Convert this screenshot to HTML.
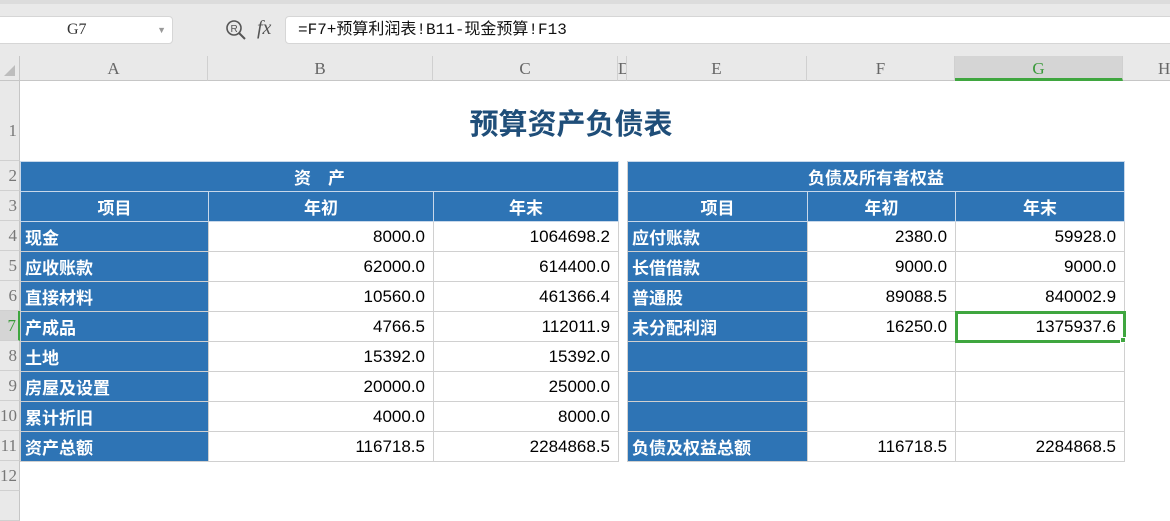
<!DOCTYPE html>
<html><head><meta charset="utf-8"><style>
*{margin:0;padding:0;box-sizing:border-box}
body{width:1170px;height:499px;overflow:hidden;background:#fff;position:relative;font-family:"Liberation Sans","Noto Sans CJK SC",sans-serif}
.a{position:absolute}
.top{left:0;top:0;width:1170px;height:56px;background:#e9e9e9;border-top:4px solid #dcdcdc}
.nb{left:-4px;top:16px;width:177px;height:28px;background:#fff;border:1px solid #d6d6d6;border-radius:4px;font:16px "Liberation Serif",serif;color:#333;line-height:26px;padding-left:70px}
.fb{left:285px;top:16px;width:900px;height:28px;background:#fff;border:1px solid #d6d6d6;border-radius:4px;font:16px "Liberation Mono","Noto Sans CJK SC",monospace;color:#111;line-height:26px;padding-left:12px}
.ch{top:56px;height:25px;background:#e9e9e9;border-bottom:1px solid #c6c6c6;border-right:1px solid #d0d0d0;font:17px "Liberation Serif",serif;color:#666;text-align:center;line-height:25px;overflow:hidden}
.rh{left:0;width:20px;background:#e9e9e9;border-right:1px solid #c6c6c6;border-bottom:1px solid #d0d0d0;font:17px "Liberation Serif",serif;color:#777;text-align:right;line-height:30px;overflow:hidden;padding-right:2px}
table{position:absolute;left:20px;top:161px;border-collapse:collapse;table-layout:fixed;width:1104px}
td{height:30px;border:1px solid #d0d0d0;font-size:17px;color:#000;padding:0 8px;text-align:right;white-space:nowrap;overflow:hidden}
td.b{background:#2e74b5;color:#fff;font-weight:bold;text-align:left;padding-left:4px;border-color:#d0d0d0}
td.h{background:#2e74b5;color:#fff;font-weight:bold;text-align:center;border-color:#c8d8ea}
td.n{border:none;border-left:1px solid #d0d0d0;border-right:1px solid #d0d0d0;padding:0}
td.sel{outline:3px solid #3fa63f;outline-offset:-2px}
</style></head><body>
<div class="a top"></div>
<div class="a nb">G7<span style="position:absolute;right:6px;top:0;font-size:9px;color:#999">▼</span></div>
<svg class="a" style="left:225px;top:19px" width="22" height="22" viewBox="0 0 22 22"><circle cx="9" cy="9" r="7" fill="none" stroke="#555" stroke-width="1.6"/><path d="M14 14l6 6" stroke="#555" stroke-width="2"/><text x="5.5" y="13" font-size="10" font-family="Liberation Sans" fill="#555">R</text></svg>
<div class="a" style="left:257px;top:17px;font:italic 20px 'Liberation Serif',serif;color:#555">fx</div>
<div class="a fb">=F7+预算利润表!B11-现金预算!F13</div>
<div class="a" style="left:0;top:56px;width:20px;height:25px;background:#e9e9e9;border-right:1px solid #c6c6c6;border-bottom:1px solid #c6c6c6"><div style="position:absolute;right:4px;bottom:4px;width:0;height:0;border-left:11px solid transparent;border-bottom:11px solid #bdbdbd"></div></div>
<div class="a ch" style="left:20px;width:188px">A</div>
<div class="a ch" style="left:208px;width:225px">B</div>
<div class="a ch" style="left:433px;width:185px">C</div>
<div class="a ch" style="left:618px;width:9px">D</div>
<div class="a ch" style="left:627px;width:180px">E</div>
<div class="a ch" style="left:807px;width:148px">F</div>
<div class="a ch" style="left:955px;width:168px;background:#d5d5d5;color:#3a9a3a;border-bottom:3px solid #3fa63f">G</div>
<div class="a ch" style="left:1123px;width:60px;border-right:none;text-align:left;padding-left:35px">H</div>
<div class="a rh" style="top:81px;height:80px;line-height:100px">1</div>
<div class="a rh" style="top:161px;height:30px">2</div>
<div class="a rh" style="top:191px;height:30px">3</div>
<div class="a rh" style="top:221px;height:30px">4</div>
<div class="a rh" style="top:251px;height:30px">5</div>
<div class="a rh" style="top:281px;height:30px">6</div>
<div class="a rh" style="top:311px;height:30px;background:#d5d5d5;color:#3a9a3a;border-right:2px solid #3fa63f">7</div>
<div class="a rh" style="top:341px;height:30px">8</div>
<div class="a rh" style="top:371px;height:30px">9</div>
<div class="a rh" style="top:401px;height:30px">10</div>
<div class="a rh" style="top:431px;height:30px">11</div>
<div class="a rh" style="top:461px;height:30px">12</div>
<div class="a rh" style="top:491px;height:30px"></div>
<div class="a" style="left:20px;top:101px;width:1150px;text-align:center;font-weight:bold;font-size:29px;color:#1f4e79"><span style="position:relative;left:-24px">预算资产负债表</span></div>
<table>
<colgroup><col style="width:188px"><col style="width:225px"><col style="width:185px"><col style="width:9px"><col style="width:180px"><col style="width:148px"><col style="width:169px"></colgroup>
<tr><td class="h" colspan="3">资　产</td><td class="n"></td><td class="h" colspan="3">负债及所有者权益</td></tr>
<tr><td class="h">项目</td><td class="h">年初</td><td class="h">年末</td><td class="n"></td><td class="h">项目</td><td class="h">年初</td><td class="h">年末</td></tr>
<tr><td class="b">现金</td><td>8000.0</td><td>1064698.2</td><td class="n"></td><td class="b">应付账款</td><td>2380.0</td><td>59928.0</td></tr>
<tr><td class="b">应收账款</td><td>62000.0</td><td>614400.0</td><td class="n"></td><td class="b">长借借款</td><td>9000.0</td><td>9000.0</td></tr>
<tr><td class="b">直接材料</td><td>10560.0</td><td>461366.4</td><td class="n"></td><td class="b">普通股</td><td>89088.5</td><td>840002.9</td></tr>
<tr><td class="b">产成品</td><td>4766.5</td><td>112011.9</td><td class="n"></td><td class="b">未分配利润</td><td>16250.0</td><td class="sel">1375937.6</td></tr>
<tr><td class="b">土地</td><td>15392.0</td><td>15392.0</td><td class="n"></td><td class="b"></td><td></td><td></td></tr>
<tr><td class="b">房屋及设置</td><td>20000.0</td><td>25000.0</td><td class="n"></td><td class="b"></td><td></td><td></td></tr>
<tr><td class="b">累计折旧</td><td>4000.0</td><td>8000.0</td><td class="n"></td><td class="b"></td><td></td><td></td></tr>
<tr><td class="b">资产总额</td><td>116718.5</td><td>2284868.5</td><td class="n"></td><td class="b">负债及权益总额</td><td>116718.5</td><td>2284868.5</td></tr>
</table>
<div class="a" style="left:1120px;top:337px;width:6px;height:6px;background:#3fa63f;border:1px solid #fff"></div>
</body></html>
